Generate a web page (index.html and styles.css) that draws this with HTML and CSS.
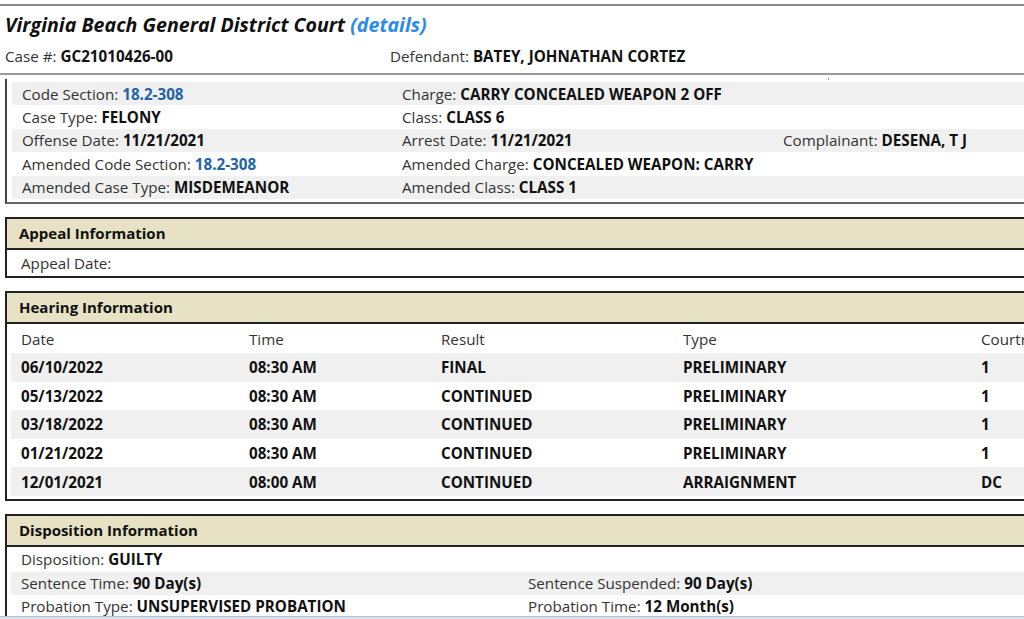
FILE: index.html
```html
<!DOCTYPE html>
<html>
<head>
<meta charset="utf-8">
<link rel="stylesheet" href="styles.css">
</head>
<body>
<div class="page">
  <div class="case-head">
    <h1 class="court">Virginia Beach General District Court <a class="details">(details)</a></h1>
    <div class="case-row">
      <div class="case-num">Case #: <b>GC21010426-00</b></div>
      <div class="defendant">Defendant: <b>BATEY, JOHNATHAN CORTEZ</b></div>
    </div>
  </div>

  <div class="charge-box">
    <span class="tick"></span>
    <div class="crow shade">
      <div class="cell">Code Section: <b class="link">18.2-308</b></div>
      <div class="cell">Charge: <b>CARRY CONCEALED WEAPON 2 OFF</b></div>
      <div class="cell"></div>
    </div>
    <div class="crow">
      <div class="cell">Case Type: <b>FELONY</b></div>
      <div class="cell">Class: <b>CLASS 6</b></div>
      <div class="cell"></div>
    </div>
    <div class="crow shade">
      <div class="cell">Offense Date: <b>11/21/2021</b></div>
      <div class="cell">Arrest Date: <b>11/21/2021</b></div>
      <div class="cell">Complainant: <b>DESENA, T J</b></div>
    </div>
    <div class="crow">
      <div class="cell">Amended Code Section: <b class="link">18.2-308</b></div>
      <div class="cell">Amended Charge: <b>CONCEALED WEAPON: CARRY</b></div>
      <div class="cell"></div>
    </div>
    <div class="crow shade">
      <div class="cell">Amended Case Type: <b>MISDEMEANOR</b></div>
      <div class="cell">Amended Class: <b>CLASS 1</b></div>
      <div class="cell"></div>
    </div>
  </div>

  <section class="box appeal">
    <div class="box-head">Appeal Information</div>
    <div class="box-body">
      <div class="drow">Appeal Date:</div>
    </div>
  </section>

  <section class="box hearing">
    <div class="box-head">Hearing Information</div>
    <div class="hgrid">
      <div class="hrow hhead"><span>Date</span><span>Time</span><span>Result</span><span>Type</span><span>Courtroom</span></div>
      <div class="hrow shade"><span>06/10/2022</span><span>08:30 AM</span><span>FINAL</span><span>PRELIMINARY</span><span>1</span></div>
      <div class="hrow"><span>05/13/2022</span><span>08:30 AM</span><span>CONTINUED</span><span>PRELIMINARY</span><span>1</span></div>
      <div class="hrow shade"><span>03/18/2022</span><span>08:30 AM</span><span>CONTINUED</span><span>PRELIMINARY</span><span>1</span></div>
      <div class="hrow"><span>01/21/2022</span><span>08:30 AM</span><span>CONTINUED</span><span>PRELIMINARY</span><span>1</span></div>
      <div class="hrow shade"><span>12/01/2021</span><span>08:00 AM</span><span>CONTINUED</span><span>ARRAIGNMENT</span><span>DC</span></div>
    </div>
  </section>

  <section class="box dispo">
    <div class="box-head">Disposition Information</div>
    <div class="box-body">
      <div class="drow first">Disposition: <b>GUILTY</b></div>
      <div class="drow two shade">
        <div>Sentence Time: <b>90 Day(s)</b></div>
        <div>Sentence Suspended: <b>90 Day(s)</b></div>
      </div>
      <div class="drow two">
        <div>Probation Type: <b>UNSUPERVISED PROBATION</b></div>
        <div>Probation Time: <b>12 Month(s)</b></div>
      </div>
    </div>
  </section>
</div>
<div class="bottom-band"></div>
</body>
</html>
```

FILE: styles.css
```css
html, body {
  margin: 0;
  padding: 0;
  overflow: hidden;
  height: 619px;
  background: #fff;
}
body {
  font-family: "Open Sans", "Noto Sans", sans-serif;
  font-size: 15.2px;
  color: #333;
  position: relative;
}
b { color: #111; font-weight: 700; }
.page {
  padding-top: 4px;
}
.case-head {
  border-top: 2px solid #8a8a8a;
  border-bottom: 2px solid #9a9a9a;
  padding: 0 0 0 5px;
}
.court {
  margin: 0;
  font-size: 19.6px;
  font-style: italic;
  font-weight: 700;
  color: #111;
  line-height: 26px;
  padding-top: 6px;
}
.details { color: #2b8be6; }
.case-row {
  display: flex;
  height: 35px;
  align-items: center;
  padding-top: 1px;
  box-sizing: border-box;
}
.case-num { width: 385px; }

.charge-box {
  position: relative;
  margin: 4px -10px 0 5px;
  border-left: 2px solid #444;
  border-bottom: 2px solid #666;
  padding: 3px 0 3px 5px;
}
.tick {
  position: absolute;
  left: 821px;
  top: -1px;
  width: 1px;
  height: 2px;
  background: #999;
}
.crow {
  display: grid;
  grid-template-columns: 380px 381px 1fr;
  height: 23.4px;
  align-items: center;
}
.cell { padding-left: 10px; white-space: nowrap; line-height: 20px; }
.shade { background: #f0f0f0; }
.link { color: #1f63a8; }

.box {
  margin: 13px -10px 0 5px;
  border: 2px solid #222;
}
.box-head {
  background: #e6e2c3;
  border-bottom: 2px solid #222;
  height: 29px;
  line-height: 29px;
  padding-left: 12px;
  font-weight: 700;
  font-size: 15px;
  color: #111;
}
.box-body { padding: 0 0 0 4px; }
.drow {
  height: 23.5px;
  line-height: 23.5px;
  padding-left: 10px;
  white-space: nowrap;
}
.drow.two { display: flex; }
.drow.two > div:first-child { width: 507px; }
.appeal .drow { height: 26px; line-height: 26px; }
.dispo .drow.first { height: 25px; line-height: 25px; }

.hgrid {
  padding: 0 0 3px 4px;
}
.hrow {
  display: grid;
  grid-template-columns: 228px 192px 242px 298px 1fr;
  height: 28.6px;
  align-items: center;
  font-weight: 700;
  color: #111;
  white-space: nowrap;
}
.hrow > span { padding-left: 10px; line-height: 20px; }
.hrow.hhead {
  height: 29px;
  padding-top: 1px;
  box-sizing: border-box;
  font-weight: 400;
  color: #333;
}

.bottom-band {
  position: absolute;
  left: 0;
  right: 0;
  top: 616px;
  height: 3px;
  background: #d6e2ee;
  border-top: 1px solid #b9c6d4;
}
```
